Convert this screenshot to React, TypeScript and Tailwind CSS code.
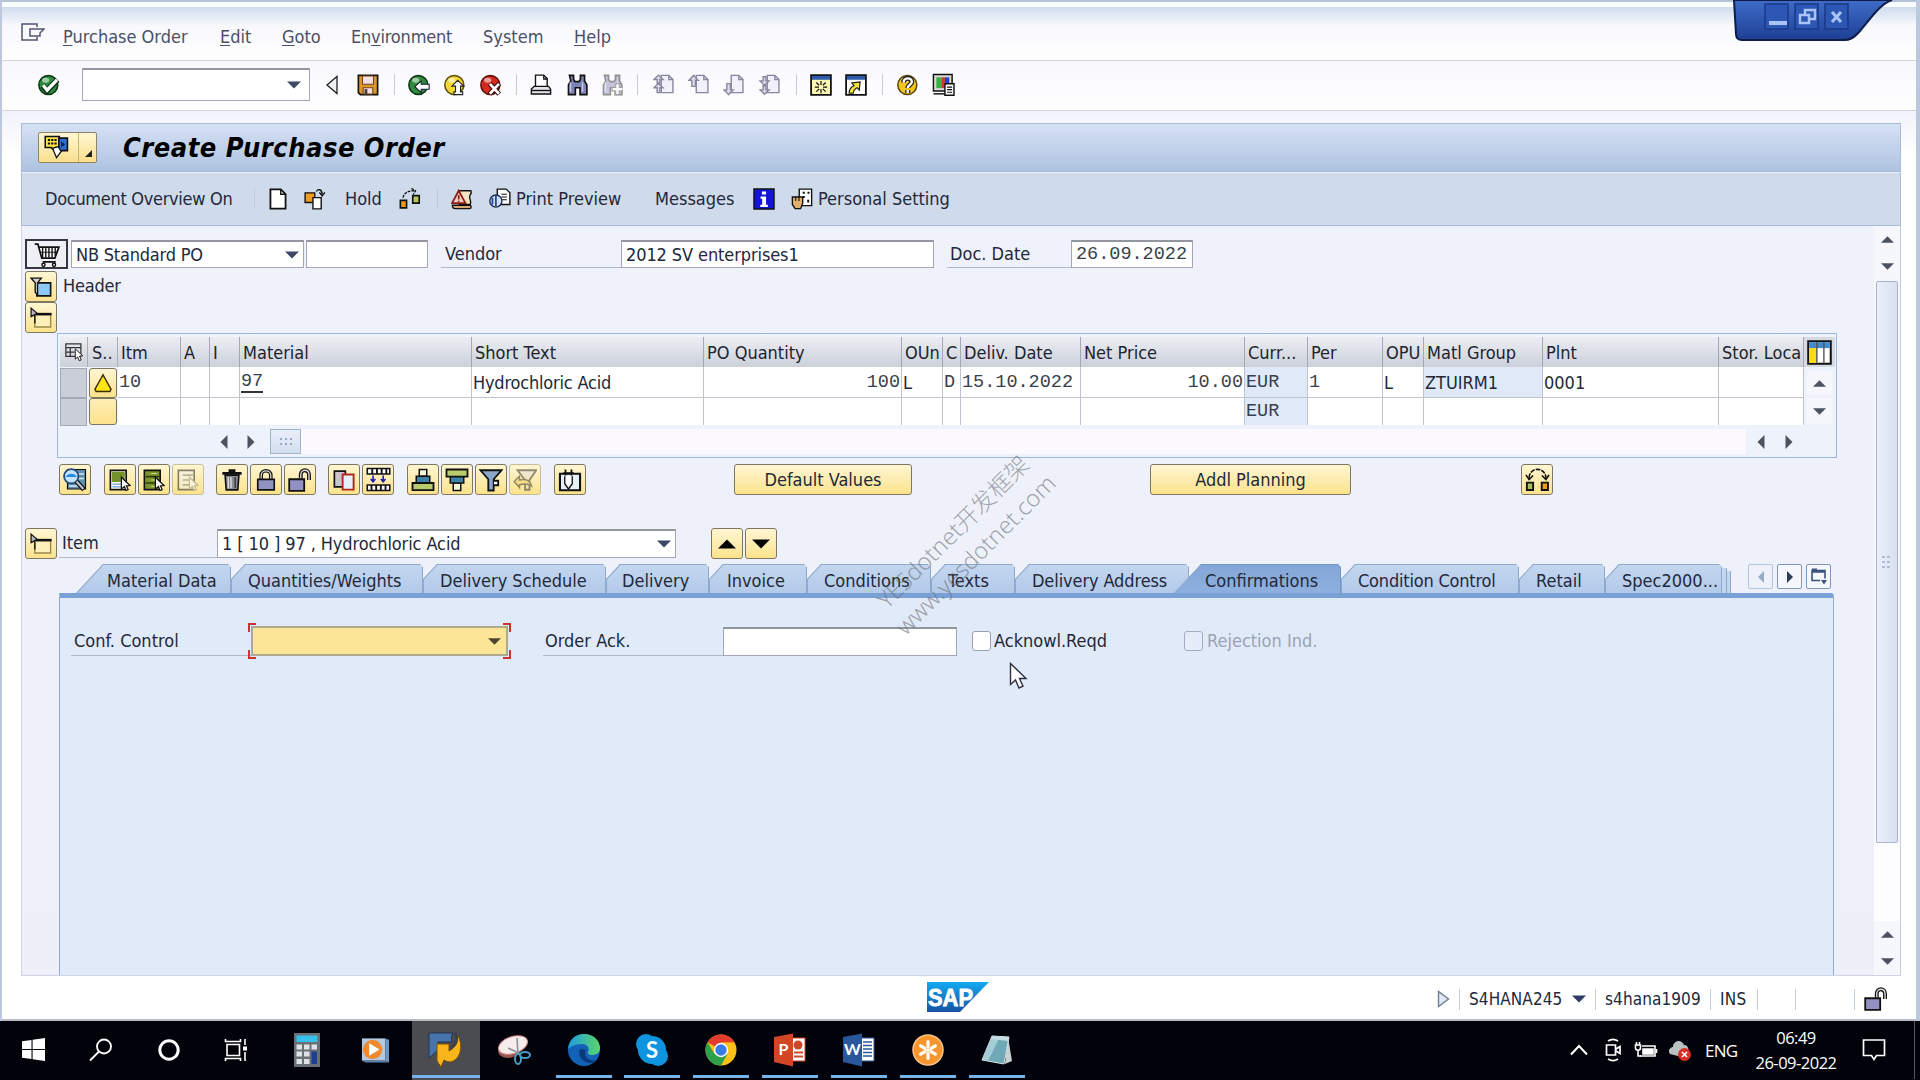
import type { ReactNode } from 'react';
import clsx from 'clsx';

const SANS = 'font-["DejaVu_Sans_Condensed","DejaVu_Sans",sans-serif] [font-stretch:condensed]';
const MONO = 'font-["Liberation_Mono",monospace] text-[18.5px] pt-[2px] text-[#3a3f4e]';

interface IconProps { children: ReactNode; size?: number; className?: string }

// All SAP GUI glyphs are drawn on a 16px grid
function Icon({ children, size = 22, className }: IconProps) {
  return (
    <svg width={size} height={size} viewBox="0 0 16 16" fill="none" stroke="#111" className={clsx('shrink-0', className)}>
      {children}
    </svg>
  );
}

function Arrow({ dir, color = '#4d5260', size = 13 }: { dir: 'up' | 'down' | 'left' | 'right'; color?: string; size?: number }) {
  const points = {
    up: '0,9 6,3 12,9',
    down: '0,3 12,3 6,9',
    left: '9,0 9,12 3,6',
    right: '3,0 9,6 3,12',
  }[dir];
  return <svg width={size} height={size} viewBox="0 0 12 12" className="shrink-0"><polygon points={points} fill={color} /></svg>;
}

const Sep = ({ className }: { className: string }) => <div className={clsx('w-px h-[21px] bg-[#c3cbe0] shrink-0', className)} />;

/* ---------- glyphs ---------- */

const Ball = ({ color, dark, children }: { color: string; dark: string; children: ReactNode }) => (
  <Icon>
    <circle cx="7.5" cy="8" r="6.9" fill={color} stroke={dark} strokeWidth="1.1" />
    <ellipse cx="5.6" cy="4.6" rx="2.6" ry="1.8" fill="#fff" fillOpacity="0.55" stroke="none" />
    {children}
  </Icon>
);
const CheckGlyph = () => <Ball color="#2f8a3c" dark="#0d3314"><path d="M3.5 8.5l3 3.6 7.6-8" stroke="#0d3314" strokeWidth="4.2" /><path d="M3.8 8.2l2.8 3.6 7.2-7.6" stroke="#fff" strokeWidth="2.4" /></Ball>;
const BackGlyph = () => <Ball color="#2f8a3c" dark="#0d3314"><path d="M5 9.2l4.6-4.2v2.5h5.8v3.6h-5.8v2.5z" fill="#fff" stroke="#123" strokeWidth=".8" /></Ball>;
const UpGlyph = () => <Ball color="#f4d730" dark="#5b4c08"><path d="M10 4.6l4.4 4.2h-2.4v4.2h1.6v2H7.2v-2H8.4V8.8H5.8z" fill="#fff" stroke="#222" strokeWidth=".8" /></Ball>;
const CancelGlyph = () => <Ball color="#d42a20" dark="#5b0f0a"><path d="M7 7l7 7.6M14 7l-7 7.6" stroke="#3c0805" strokeWidth="3.6" /><path d="M7.2 7.2l6.6 7.2M13.8 7.2l-6.6 7.2" stroke="#fff" strokeWidth="2" /></Ball>;
const HelpGlyph = () => <Ball color="#f2c51e" dark="#5b4606"><path d="M4.800 6.200c0-4 6-4 6-.4 0 2-3 2-3 4.400M7.800 11.600v2.200" stroke="#222" strokeWidth="3.600" /><path d="M4.800 6.200c0-4 6-4 6-.4 0 2-3 2-3 4.400M7.800 11.600v2.200" stroke="#fff" strokeWidth="1.700" /></Ball>;

const SaveGlyph = () => (
  <Icon>
    <path d="M1 1h14v14H2.5L1 13.5z" fill="#e0952a" strokeWidth="1.2" />
    <path d="M4 1.5h8v6H4z" fill="#f6dfe4" stroke="#6d4a1c" strokeWidth=".8" />
    <path d="M4.500 10h7v4.500h-7z" fill="#f6dfe4" stroke="#6d4a1c" strokeWidth=".8" />
    <path d="M5.500 11h2v3.500h-2z" fill="#4a3a30" stroke="none" />
  </Icon>
);
const PrintGlyph = () => (
  <Icon>
    <path d="M4 9V.8h6l2.500 2.500V9" fill="#fff" />
    <path d="M10 1v2.600h2.500" />
    <path d="M3 9h10.500l1.500 2v3.500H1V11z" fill="#e2e2ea" />
    <path d="M1 12h14" />
  </Icon>
);
const Binoculars = ({ plus }: { plus?: boolean }) => (
  <Icon className={plus ? 'opacity-45' : ''}>
    <path d="M2.500 1h3v3l1 1.500h3l1-1.500V1h3v4l1.700 3v7h-5v-5h-3.400v5h-5V8l1.700-3z" fill="#7f84b8" strokeWidth="1.200" />
    <path d="M3.200 6v7M12 6v7" stroke="#c9cdea" />
    {plus && <path d="M12 7v8M8 11h8" stroke="#fff" strokeWidth="3" />}
    {plus && <path d="M10.700 7h2.600v2.700H16v2.600h-2.700V15h-2.600v-2.700H8V9.700h2.700z" fill="#fff" stroke="#333" strokeWidth=".8" />}
  </Icon>
);
// first / previous / next / last page
const PageGlyph = ({ kind }: { kind: 'first' | 'prev' | 'next' | 'last' }) => (
  <Icon className="opacity-60">
    <path d="M6 1h5.500l3 3v9.500H6z" fill="#ececfa" stroke="#3a3a5c" />
    <path d="M11.500 1v3h3" stroke="#3a3a5c" />
    {kind === 'first' && <path d="M.7 4L4 .8 7.300 4H5v2.500H3V4zM.7 10L4 6.800 7.300 10H5v3.500H3V10z" fill="#c8c8e4" stroke="#3a3a5c" />}
    {kind === 'prev' && <path d="M4 1L.8 4.500h2V9h2.600V4.500h2z" fill="#c8c8e4" stroke="#3a3a5c" />}
    {kind === 'next' && <path d="M4 15L.8 11.500h2V7h2.600v4.500h2z" fill="#c8c8e4" stroke="#3a3a5c" />}
    {kind === 'last' && <path d="M.7 5L4 8.200 7.300 5H5V2H3v3zM.7 11.500L4 14.700l3.300-3.200H5v-3H3v3z" fill="#c8c8e4" stroke="#3a3a5c" />}
  </Icon>
);
const WindowGlyph = ({ link }: { link?: boolean }) => (
  <Icon>
    <path d="M.8 .8h14.400v14.400H.8z" fill={link ? '#fff' : '#fdf7b4'} strokeWidth="1.300" />
    <path d="M1.400 1.400h13.200v2.800H1.400z" fill="#2c5cab" stroke="none" />
    {link
      ? <path d="M3 14c0-3 1-4.500 3.500-5.500L5 6.500l6-.8-.6 6-1.600-1.800C7 11 6 12 6 14z" fill="#f4e02e" strokeWidth=".8" />
      : <path d="M8 5v9M3.500 9.500h9M4.600 6.200l6.800 6.600M11.400 6.200l-6.800 6.600" stroke="#111" strokeWidth=".9" />}
    {!link && <rect x="6.500" y="8" width="3" height="3" fill="#fdf7b4" stroke="none" />}
  </Icon>
);
const LayoutGlyph = () => (
  <Icon size={23}>
    <path d="M1 1h13v11.500H1z" fill="#d8d8d8" />
    <path d="M3 3h3.500v7.500H3z" fill="#3fae3f" stroke="none" /><path d="M6.500 3H9v7.500H6.500z" fill="#d23a2b" stroke="none" /><path d="M9 3h3v7.500H9z" fill="#2b3fc0" stroke="none" />
    <path d="M1 14.500h8" />
    <path d="M9 7.500h6.300v8H9z" fill="#fff" /><path d="M10.500 9.800h3.500M10.500 11.600h3.500M10.500 13.400h3.500" strokeWidth=".8" />
  </Icon>
);
const ServiceGlyph = () => (
  <Icon size={25}>
    <path d="M.8 1h9v7H7.500v3l-3-3H.8z" fill="#f8e544" />
    <path d="M2.500 3.200h5.600M2.500 5.400h5.600" strokeDasharray="1.400 .7" strokeWidth="1.200" />
    <path d="M9.500 2h5.500v8H9.500z" fill="#2e6fd0" /><path d="M11 4l2.500 2L11 8z" fill="#10234a" stroke="none" />
    <path d="M5.500 8.500l2.500 6 3-4-2-3z" fill="#fff" strokeWidth=".8" />
  </Icon>
);
const NewDocGlyph = () => <Icon><path d="M2.500 1h7.500l3.500 3.500V15h-11z" fill="#fff" strokeWidth="1.300" /><path d="M10 1v3.500h3.500" /></Icon>;
const CopyDocGlyph = () => (
  <Icon>
    <path d="M.8 3.500h7v7h-7z" fill="#f29a1c" /><path d="M6.500 7h6v8.200h-6z" fill="#fff" />
    <path d="M9 2.500C10 .5 13 .5 13.200 4.500M11.200 3.200l2 2.600 2-2.600" strokeWidth="1" />
  </Icon>
);
const HoldGlyph = () => (
  <Icon>
    <path d="M1 9h4.500v5.500H1z" fill="#f29a1c" strokeWidth="1.200" /><path d="M10 5.500h4.700V11H10z" fill="#b5c95e" strokeWidth="1.200" />
    <path d="M3 7c.5-3 3-5 8-5M9 .3l3 1.700-1.600 2.600" strokeDasharray="2 .8" />
  </Icon>
);
const WarnScrollGlyph = () => (
  <Icon>
    <path d="M6 2h8.500c1 2-1 3-1 4.500S15 9 14 12H6z" fill="#f4e3c1" />
    <path d="M5.600 2L10.500 11H.8z" fill="#f3cfc7" stroke="#8c2016" strokeWidth="1.300" /><path d="M5.600 5v3.400M5.600 9.200v1" stroke="#8c2016" strokeWidth="1.200" />
    <path d="M1 12.500h12.500c1.500 0 1.500 2.500 0 2.500H3c-1.200 0-2-1.200-2-2.500z" fill="#d9a774" />
  </Icon>
);
const PreviewGlyph = () => (
  <Icon>
    <path d="M6 .8h6.500L15.200 3.500V12H6z" fill="#fff" /><path d="M9 4.500h4M9 6.500h4M9 8.500h4" strokeWidth=".8" />
    <circle cx="5" cy="9.500" r="4.400" fill="#cfe0f5" stroke="#1c2b52" /><path d="M5 5.500v8M2.500 7v5" stroke="#27489a" strokeWidth="1.300" />
  </Icon>
);
const InfoGlyph = () => <Icon><path d="M.7 .7h14.600v14.600H.7z" fill="#1414d8" /><path d="M6.500 2.500h3v2.300h-3zM5.500 6.200h4v6h1.300v1.600H5.300v-1.600h1.400V7.800H5.500z" fill="#fff" stroke="none" /></Icon>;
const PersonalGlyph = () => (
  <Icon>
    <path d="M6 .8h9v12H6z" fill="#fff" /><path d="M8.500 3.500h1.500M12 3.500h1.500M8.500 6.500h1.500M12.500 8.500v2" strokeWidth="1.400" />
    <path d="M1 6.500h7.500v4.500L7 15H3l-2-3z" fill="#e2b26c" /><path d="M3.500 6.500v3M5.800 6.500v3" strokeWidth=".8" />
  </Icon>
);
const CartGlyph = () => (
  <Icon size={28}>
    <path d="M1 2.300h1.800l2.200 8h7.500L14.800 4H3.500" fill="#fff" strokeWidth="1" />
    <path d="M5.500 4v6M7.300 4v6M9.100 4v6M10.900 4v6M12.700 4v5" strokeWidth=".8" /><path d="M4 7h10" strokeWidth=".5" />
    <path d="M5.500 12.500h7.500" strokeWidth="1" /><circle cx="6" cy="14.200" r=".9" fill="#fff" strokeWidth=".8" /><circle cx="12" cy="14.200" r=".9" fill="#fff" strokeWidth=".8" />
  </Icon>
);
const ExpandGlyph = () => <Icon><path d="M5 5h10v9.500H5z" fill="#8ccaf5" strokeWidth="1.200" /><path d="M.7 1.500h7.500L5.500 5v8.500L3.800 12V5z" fill="#d8d2d8" strokeWidth="1" /></Icon>;
const CollapseGlyph = () => <Icon><path d="M3.500 5v9.500h11.500V5z" fill="#fdf0b8" stroke="#9a8a4c" /><path d="M4 5.200h11.700" strokeWidth="1.900" /><path d="M.8 .8L5.200 4.600.8 7z" fill="#b8b4bc" strokeWidth=".9" /><path d="M3.500 6v6" strokeWidth="1" /></Icon>;
const SelectAllGlyph = () => <Icon size={20}><path d="M1.500 1.500h12v10h-12zM1.500 4.500h12M1.500 8h7M5 4.500v7" stroke="#333" /><path d="M9 5.500l6 5.500-2.600.3 1.400 3-1.600.7-1.300-3-1.900 1.700z" fill="#fff" stroke="#222" strokeWidth=".8" /></Icon>;
const ConfigGlyph = () => <Icon size={25}><path d="M.8 .8h14.400v14.400H.8z" fill="#fff" strokeWidth="1.300" /><path d="M1.400 1.400h13.200v3.800H1.400z" fill="#3f8ad0" stroke="none" /><path d="M1.400 5.200h4.800v9.400H1.400z" fill="#f8dc12" stroke="none" /><path d="M6.300 1.500v13M10.800 1.500v13" stroke="#555" strokeWidth=".9" /></Icon>;
const AlertGlyph = () => <Icon size={20}><path d="M8 1.500l1.400 2.500 5 9-.9 1.800H2.500L1.600 13l5-9z" fill="#fde414" stroke="#3b2c00" strokeWidth="1.200" /></Icon>;
const Pointer = ({ dim }: { dim?: boolean }) => <path d="M9 6l6.300 6-2.600.2 1.200 2.800-1.500.6-1.200-2.900L9 14.500z" fill="#fff" stroke={dim ? '#888' : '#111'} strokeWidth=".9" />;
const DetailGlyph = () => <Icon size={24}><path d="M3 1h12v13H3z" fill="#5f93ad" strokeWidth=".8" /><path d="M10 4h4M10 7h4M4 12h7" stroke="#dbeaf2" /><circle cx="5.500" cy="5.500" r="4.800" fill="#c4e4fb" stroke="#234a7c" strokeWidth="1.200" /><path d="M1.500 6c2-3 6-3 8 0z" fill="#2a8be0" stroke="none" /><path d="M9 9l5 5.500" stroke="#111" strokeWidth="3.200" /><path d="M9 9l4.600 5" stroke="#bfc4cc" strokeWidth="1.400" /></Icon>;
const BlockGlyph = () => <Icon><path d="M1 1h11.500v14H1z" fill="#fff" strokeWidth="1.200" /><path d="M2 2h9.500v7.500H2z" fill="#75912a" stroke="none" /><path d="M2.500 11H11M2.500 13H11" stroke="#6a9cc4" /><Pointer /></Icon>;
const ListGlyph = ({ dim }: { dim?: boolean }) => (
  <Icon className={dim ? 'opacity-50' : ''}>
    <path d="M1 1h11.500v14H1z" fill={dim ? '#f2f2f2' : '#7d962c'} strokeWidth="1.200" />
    <path d={dim ? 'M4 4.500h7.500M4 8h7.500M4 11.500h5' : 'M2 5.500h9.500M2 10.200h7'} stroke={dim ? '#777' : '#2c3a08'} strokeWidth="1.200" />
    {!dim && <path d="M6 3.300h4M6 8h3M6 12.700h3" stroke="#cdd98e" strokeWidth=".8" />}
    <Pointer dim={dim} />
  </Icon>
);
const TrashGlyph = () => <Icon><path d="M3 4.500h10l-.8 10.700H3.800z" fill="#8b8b94" strokeWidth="1.200" /><path d="M5.300 6v8M7.300 6v8" stroke="#ddd" /><path d="M10.300 6v8" stroke="#333" /><path d="M1 3.200h14M5.500 1.200h5" strokeWidth="2" /></Icon>;
const LockGlyph = ({ open }: { open?: boolean }) => (
  <Icon size={open ? 24 : 22}>
    {open
      ? <><path d="M8.500 7V4.500c0-4 5.500-4 5.500 0V8" strokeWidth="2.600" /><path d="M8.500 7V4.500c0-4 5.500-4 5.500 0V8" stroke="#ddd" strokeWidth=".9" /></>
      : <><path d="M4.500 7.500V4.600c0-4.400 7-4.400 7 0v2.900" strokeWidth="2.600" /><path d="M4.500 7.500V4.600c0-4.400 7-4.400 7 0v2.900" stroke="#ddd" strokeWidth=".9" /></>}
    <path d={open ? 'M.8 7.500h10v7.700H.8z' : 'M2 7.500h12v7.700H2z'} fill="#9291c4" strokeWidth="1.200" />
  </Icon>
);
const DuplicateGlyph = () => <Icon><path d="M1 1.500h8v11.500H1z" fill="#c9c4cc" strokeWidth="1.200" /><path d="M7 4h8v11H7z" fill="#e4f0fc" stroke="#b4281c" strokeWidth="1.400" /></Icon>;
const BarcodeGlyph = () => <Icon size={25}><path d="M.8 1h14.400v3.500H.8zM.8 11.500h14.400V15H.8z" fill="#fff" /><path d="M4 1v3.500M7 1v3.500M10 1v3.500M13 1v3.500M3.500 11.500V15M6.500 11.500V15M9.500 11.500V15M12.500 11.500V15" strokeWidth="1.200" /><path d="M4.500 5.500V9M3 7.700L4.500 9.500 6 7.700M11 5.500V9M9.500 7.700L11 9.500l1.500-1.800" stroke="#1c1cb4" /></Icon>;
const SortUpGlyph = () => <Icon size={24}><path d="M5.500 1h5v4.500h-5z" fill="#f5f5d8" /><path d="M3.500 5.500h9v4.500h-9z" fill="#3d80a8" /><path d="M1 10h14v4.800H1z" fill="#b9cb6c" strokeWidth="1.200" /></Icon>;
const SortDownGlyph = () => <Icon size={24}><path d="M5.500 10h5v5h-5z" fill="#f5f5d8" /><path d="M3.500 5.500h9V10h-9z" fill="#3d80a8" /><path d="M1 1h14v4.800H1z" fill="#b9cb6c" strokeWidth="1.200" /></Icon>;
const FilterGlyph = ({ undo }: { undo?: boolean }) => (
  <Icon size={24} className={undo ? 'opacity-45' : ''}>
    {undo
      ? <><path d="M3 1.500h12.500L11 8v6.500H8V8z" fill="#ddd" strokeWidth="1.200" /><path d="M.8 9l3.500-3.500V8c4-1 7 0 8 4-2-1.700-5-1.600-8-.8V13z" fill="#f0d060" /></>
      : <><path d="M1 1.500h14L9.800 7.500V15H6.200V7.500z" fill="#8ba6c8" strokeWidth="1.200" /><path d="M10 8.500h2.800v3H10" fill="#fff" strokeWidth="1.200" /></>}
  </Icon>
);
const PlanGlyph = () => <Icon size={24}><path d="M1.300 3.800h13.400v11H1.300z" fill="#e4f0fa" strokeWidth="1.400" /><path d="M5 1v4M9 1v4M3.500 3.500h7" strokeWidth="1.200" /><path d="M4.500 5.500v5L7 14l2.500-3.500v-5" fill="#fff" strokeWidth=".9" /></Icon>;
const SwapGlyph = () => <Icon size={25}><path d="M1.200 10h4v4.700h-4z" fill="#a8bd5c" strokeWidth="1.200" /><path d="M10.700 10h4v4.700h-4z" fill="#f29a1c" strokeWidth="1.200" /><path d="M2.500 7C3 3 5.500 1.500 8 1.500S13 3 13.500 7" strokeDasharray="3 .7" /><path d="M.6 5l2 3 2.600-2.600M15.400 5l-2 3-2.600-2.600" /></Icon>;

/* ---------- small controls ---------- */

function YellowButton({ children, className, dim }: { children?: ReactNode; className?: string; dim?: boolean }) {
  return (
    <button className={clsx(
      'flex items-center justify-center shrink-0 h-[31px] rounded-[3px] border-[1.5px] bg-linear-to-b from-[#fff6d2] to-[#fce28c]',
      dim ? 'border-[#c6bd9c]' : 'border-[#7d7762]',
      className,
    )}>
      {children}
    </button>
  );
}

const FIELD = 'flex items-center shrink-0 bg-white border border-[#a3a6b4] border-t-2 border-t-[#94969f]';

const MENU = [
  { pre: '', key: 'P', post: 'urchase Order', w: 'w-[157px]' },
  { pre: '', key: 'E', post: 'dit', w: 'w-[62px]' },
  { pre: '', key: 'G', post: 'oto', w: 'w-[69px]' },
  { pre: 'En', key: 'v', post: 'ironment', w: 'w-[132px] tracking-[-0.2px]' },
  { pre: 'S', key: 'y', post: 'stem', w: 'w-[91px]' },
  { pre: '', key: 'H', post: 'elp', w: 'w-[60px]' },
];

interface Column { title: string; w: string; value?: ReactNode; value2?: string; mono?: boolean; right?: boolean; shade?: boolean; shade2?: boolean }
const COLUMNS: Column[] = [
  { title: 'Itm', w: 'w-[63px]', value: '10', mono: true },
  { title: 'A', w: 'w-[29px]' },
  { title: 'I', w: 'w-[30px]' },
  { title: 'Material', w: 'w-[232px]', value: <span className="border-b-2 border-[#333]">97</span>, mono: true },
  { title: 'Short Text', w: 'w-[232px]', value: <span className="tracking-[-0.2px]">Hydrochloric Acid</span> },
  { title: 'PO Quantity', w: 'w-[198px]', value: '100', mono: true, right: true },
  { title: 'OUn', w: 'w-[41px]', value: 'L' },
  { title: 'C', w: 'w-[18px]', value: 'D', mono: true },
  { title: 'Deliv. Date', w: 'w-[120px]', value: '15.10.2022', mono: true },
  { title: 'Net Price', w: 'w-[164px]', value: '10.00', mono: true, right: true },
  { title: 'Curr...', w: 'w-[63px]', value: 'EUR', value2: 'EUR', mono: true, shade: true, shade2: true },
  { title: 'Per', w: 'w-[75px]', value: '1', mono: true },
  { title: 'OPU', w: 'w-[41px]', value: 'L' },
  { title: 'Matl Group', w: 'w-[119px]', value: 'ZTUIRM1', shade: true },
  { title: 'Plnt', w: 'w-[176px]', value: '0001' },
  { title: 'Stor. Loca', w: 'w-[85px]' },
];

const TABS = [
  { label: 'Material Data', cls: 'w-[155px] pl-[31px] [clip-path:polygon(0_100%,27px_0,152px_0,155px_3px,100%_100%)]' },
  { label: 'Quantities/Weights', cls: 'w-[192px] pl-[17px]' },
  { label: 'Delivery Schedule', cls: 'w-[183px] pl-[17px]' },
  { label: 'Delivery', cls: 'w-[103px] pl-[16px]' },
  { label: 'Invoice', cls: 'w-[98px] pl-[18px]' },
  { label: 'Conditions', cls: 'w-[124px] pl-[17px]' },
  { label: 'Texts', cls: 'w-[84px] pl-[17px]' },
  { label: 'Delivery Address', cls: 'w-[174px] pl-[17px] tracking-[-0.1px]' },
  { label: 'Confirmations', active: true, cls: 'w-[167px] pl-[31px] -ml-[15px] [clip-path:polygon(0_100%,27px_0,164px_0,167px_3px,100%_100%)]' },
  { label: 'Condition Control', cls: 'w-[178px] pl-[17px] tracking-[-0.2px]' },
  { label: 'Retail', cls: 'w-[86px] pl-[17px]' },
  { label: 'Spec2000...', cls: 'w-[117px] pl-[17px]' },
];
const TAB_CLIP = '[clip-path:polygon(0_100%,0_15px,14px_0,calc(100%-3px)_0,100%_3px,100%_100%)]';

/* ---------- sections ---------- */

function MenuBar() {
  return (
    <div className="h-[54px] shrink-0 flex items-center pt-[6px] pl-[19px] border-b border-[#d3d4de] bg-linear-to-b from-[#d0dced] via-[#f8f8fd] via-35% to-white">
      <svg width="24" height="19" viewBox="0 0 24 19" fill="none" stroke="#4f5572" strokeWidth="1.500" className="mr-[18px] -mt-[8px] shrink-0">
        <path d="M16 4V1H1v16h15v-3" /><path d="M9 13V6h14l-4 4v3z" />
      </svg>
      {MENU.map(m => (
        <span key={m.key + m.post} className={clsx('shrink-0 text-[#4b4f68]', m.w)}>
          {m.pre}<u className="underline-offset-2">{m.key}</u>{m.post}
        </span>
      ))}
    </div>
  );
}

function SystemBar() {
  return (
    <div className="h-[50px] shrink-0 flex items-center pb-[2px] pl-[36px] border-b border-[#d3d4de] bg-linear-to-b from-[#f8f7fc] to-white">
      <CheckGlyph />
      <div className={clsx(FIELD, 'ml-[22px] w-[228px] h-[33px] justify-end pr-[8px]')}><Arrow dir="down" color="#3d4766" size={14} /></div>
      <svg width="14" height="20" viewBox="0 0 14 20" className="ml-[15px] shrink-0"><path d="M12 1.500v17L2 10z" fill="#f1f1f6" stroke="#222" strokeWidth="1.300" /></svg>
      <div className="w-[18px]" /><SaveGlyph />
      <Sep className="ml-[15px] mr-[13px]" />
      <BackGlyph /><div className="w-[14px]" /><UpGlyph /><div className="w-[14px]" /><CancelGlyph />
      <Sep className="ml-[14px] mr-[13px]" />
      <PrintGlyph /><div className="w-[14px]" /><Binoculars /><div className="w-[13px]" /><Binoculars plus />
      <Sep className="ml-[14px] mr-[15px]" />
      <PageGlyph kind="first" /><div className="w-[13px]" /><PageGlyph kind="prev" /><div className="w-[13px]" />
      <PageGlyph kind="next" /><div className="w-[14px]" /><PageGlyph kind="last" />
      <Sep className="ml-[15px] mr-[13px]" />
      <WindowGlyph /><div className="w-[13px]" /><WindowGlyph link />
      <Sep className="ml-[15px] mr-[14px]" />
      <HelpGlyph /><div className="w-[13px]" /><LayoutGlyph />
    </div>
  );
}

function TitleBar() {
  return (
    <div className="h-[49px] flex items-center pl-[16px] border border-[#a9bad6] bg-linear-to-b from-[#d6e1f5] to-[#aec3e0]">
      <button className="flex items-center w-[59px] h-[31px] rounded-[2px] border-[1.5px] border-[#8e8768] bg-linear-to-b from-[#fff6d2] to-[#fadf8c]">
        <div className="w-[40px] h-full flex items-center justify-center pr-[4px] border-r border-[#c9b676]"><ServiceGlyph /></div>
        <svg width="7" height="7" viewBox="0 0 7 7" className="ml-[6px] mt-[12px]"><path d="M7 0v7H0z" fill="#222" /></svg>
      </button>
      <span className="ml-[26px] font-bold italic text-[27px] leading-none text-black tracking-[0.5px]">Create Purchase Order</span>
    </div>
  );
}

function AppBar() {
  return (
    <div className="h-[54px] flex items-center pl-[23px] pb-[1px] border border-t-[#eef3fb] border-[#a9bad6] bg-[#cfdbeb]">
      <span className="w-[209px] tracking-[-0.3px]">Document Overview On</span>
      <Sep className="mr-[12px]" />
      <NewDocGlyph /><div className="w-[15px]" /><CopyDocGlyph />
      <span className="w-[54px] ml-[19px]">Hold</span>
      <HoldGlyph /><Sep className="ml-[16px] mr-[13px]" />
      <WarnScrollGlyph /><div className="w-[16px]" /><PreviewGlyph />
      <span className="w-[139px] ml-[5px]">Print Preview</span>
      <span className="w-[98px]">Messages</span>
      <InfoGlyph /><div className="w-[16px]" /><PersonalGlyph />
      <span className="ml-[5px]">Personal Setting</span>
    </div>
  );
}

function DocumentRow() {
  return (
    <div className="mt-[13px] h-[30px] flex items-center">
      <button className="flex items-center justify-center w-[43px] h-[30px] border-[2.5px] border-[#36373e] bg-[#eef0f6] shrink-0"><CartGlyph /></button>
      <div className={clsx(FIELD, 'ml-[3px] w-[233px] h-[28px] pl-[4px] pr-[4px] justify-between')}>
        <span className="tracking-[-0.2px]">NB Standard PO</span><Arrow dir="down" color="#3d4766" size={14} />
      </div>
      <div className={clsx(FIELD, 'ml-[2px] w-[122px] h-[28px]')} />
      <div className="ml-[13px] w-[180px] h-[28px] pl-[4px] flex items-center border-b border-[#b3b8c8]">Vendor</div>
      <div className={clsx(FIELD, 'w-[313px] h-[28px] pl-[4px] tracking-[-0.1px]')}>2012 SV enterprises1</div>
      <div className="ml-[13px] w-[124px] h-[28px] pl-[3px] flex items-center border-b border-[#b3b8c8]">Doc. Date</div>
      <div className={clsx(FIELD, MONO, 'w-[122px] h-[28px] pl-[4px]')}>26.09.2022</div>
    </div>
  );
}

function ItemTable() {
  return (
    <div className="ml-[32px] w-[1780px] h-[125px] border-[1.5px] border-[#9cb7dd] bg-[#eef2fa] pt-[3px] pl-[2px] flex flex-col shrink-0">
      <div className="flex">
        <div className="flex flex-col w-[27px] shrink-0">
          <div className="h-[30px] flex items-center justify-center bg-linear-to-b from-[#eceef3] to-[#ccd0d9]"><SelectAllGlyph /></div>
          <div className="h-[30px] mt-px bg-[#c9ced9] border border-[#a4a9b8]" />
          <div className="h-[28px] bg-[#c9ced9] border border-[#a4a9b8]" />
        </div>
        <div className="flex flex-col w-[31px] shrink-0">
          <div className="h-[30px] pl-[4px] pt-[2px] flex items-center border-x border-[#a9adb9] bg-linear-to-b from-[#eceef3] to-[#ccd0d9]">S..</div>
          <YellowButton className="ml-[2px] w-[28px] h-[30px]! mt-px"><AlertGlyph /></YellowButton>
          <YellowButton className="ml-[2px] w-[28px] h-[27px]! from-[#fdeeb6]!" />
        </div>
        {COLUMNS.map(c => (
          <div key={c.title} className={clsx('flex flex-col shrink-0 whitespace-nowrap', c.w)}>
            <div className="h-[30px] pl-[3px] pt-[2px] flex items-center border-r border-[#a4a8b6] bg-linear-to-b from-[#eceef3] to-[#ccd0d9] text-[#20242e]">{c.title}</div>
            <div className={clsx(
              'h-[31px] px-px flex items-center border-r border-b border-[#bfc3d0]',
              c.mono ? MONO : 'pt-[2px]', c.right && 'justify-end', c.shade ? 'bg-[#dfe9f7]' : 'bg-white',
            )}>{c.value}</div>
            <div className={clsx('h-[27px] px-px flex items-center border-r border-[#bfc3d0]', c.mono && MONO, c.shade2 ? 'bg-[#dfe9f7]' : 'bg-white')}>{c.value2}</div>
          </div>
        ))}
        <div className="flex flex-col items-center w-[31px] shrink-0">
          <div className="h-[30px] w-full flex items-center justify-center bg-[#d6d9e1]"><ConfigGlyph /></div>
          <div className="mt-[4px] h-[24px] w-[25px] flex items-center justify-center bg-[#f6f7fc]"><Arrow dir="up" /></div>
          <div className="mt-[3px] h-[26px] w-[25px] flex items-center justify-center bg-[#f6f7fc]"><Arrow dir="down" /></div>
        </div>
      </div>
      <div className="flex items-center mt-[3px] h-[25px]">
        <div className="ml-[157px] w-[17px]"><Arrow dir="left" size={14} /></div>
        <div className="ml-[10px] w-[26px]"><Arrow dir="right" size={14} /></div>
        <div className="w-[31px] h-[25px] border border-[#a3b2cc] bg-linear-to-b from-[#e9effa] to-[#d2deef] flex items-center justify-center">
          <svg width="14" height="10" fill="#9aa6bf"><path d="M1 1h2v2H1zM6 1h2v2H6zM11 1h2v2h-2zM1 6h2v2H1zM6 6h2v2H6zM11 6h2v2h-2z" /></svg>
        </div>
        <div className="w-[1445px] h-full bg-[#fbf9fe]" />
        <div className="ml-[8px] w-[28px]"><Arrow dir="left" size={14} /></div>
        <Arrow dir="right" size={14} />
      </div>
    </div>
  );
}

function ItemActions() {
  return (
    <div className="mt-[6px] ml-[34px] flex items-center h-[31px]">
      <YellowButton className="w-[32px]"><DetailGlyph /></YellowButton>
      <div className="flex gap-[2px] ml-[13px]">
        <YellowButton className="w-[32px]"><BlockGlyph /></YellowButton>
        <YellowButton className="w-[32px]"><ListGlyph /></YellowButton>
        <YellowButton className="w-[32px]" dim><ListGlyph dim /></YellowButton>
      </div>
      <div className="flex gap-[2px] ml-[12px]">
        <YellowButton className="w-[32px]"><TrashGlyph /></YellowButton>
        <YellowButton className="w-[32px]"><LockGlyph /></YellowButton>
        <YellowButton className="w-[32px]"><LockGlyph open /></YellowButton>
      </div>
      <div className="flex gap-[2px] ml-[12px]">
        <YellowButton className="w-[32px]"><DuplicateGlyph /></YellowButton>
        <YellowButton className="w-[32px]"><BarcodeGlyph /></YellowButton>
      </div>
      <div className="flex gap-[2px] ml-[13px]">
        <YellowButton className="w-[32px]"><SortUpGlyph /></YellowButton>
        <YellowButton className="w-[32px]"><SortDownGlyph /></YellowButton>
        <YellowButton className="w-[32px]"><FilterGlyph /></YellowButton>
        <YellowButton className="w-[32px]" dim><FilterGlyph undo /></YellowButton>
      </div>
      <YellowButton className="w-[32px] ml-[13px]"><PlanGlyph /></YellowButton>
      <YellowButton className="w-[178px] ml-[148px]">Default Values</YellowButton>
      <YellowButton className="w-[201px] ml-[238px]">Addl Planning</YellowButton>
      <YellowButton className="w-[32px] ml-[170px]"><SwapGlyph /></YellowButton>
    </div>
  );
}

function ItemSelector() {
  return (
    <div className="mt-[33px] flex items-center h-[31px]">
      <YellowButton className="w-[32px]"><CollapseGlyph /></YellowButton>
      <div className="ml-[2px] w-[158px] h-[29px] pl-[3px] flex items-center border-b border-[#b3b8c8]">Item</div>
      <div className={clsx(FIELD, 'w-[459px] h-[29px] pl-[4px] pr-[4px] justify-between')}>
        <span className="tracking-[-0.1px]">1 [ 10 ] 97 , Hydrochloric Acid</span><Arrow dir="down" color="#3d4766" size={14} />
      </div>
      <YellowButton className="w-[32px] ml-[35px]"><Arrow dir="up" color="#000" size={18} /></YellowButton>
      <YellowButton className="w-[32px] ml-[2px]"><Arrow dir="down" color="#000" size={18} /></YellowButton>
    </div>
  );
}

function TabStrip() {
  return (
    <div className="mt-[5px] ml-[51px] flex h-[29px] whitespace-nowrap">
      {TABS.map((t, i) => (
        <div key={t.label} className={clsx(
          'relative shrink-0 flex items-center pt-[3px] border-t-[1.5px] border-r-[1.5px]',
          i !== 0 && !t.active && TAB_CLIP, t.cls,
          t.active ? 'border-[#7396c8] bg-linear-to-b from-[#83a6d8] to-[#8fb0df]' : 'border-[#8fa9cc] bg-linear-to-b from-[#c3d6ef] to-[#b2cae9]',
        )}>
          <svg width="28" height="29" className="absolute -left-px -top-[1.5px]" fill="none" stroke="#8fa9cc" strokeWidth="2">
            <path d={i === 0 || t.active ? 'M1 29L28 0' : 'M1 29V15L15 0'} />
          </svg>
          {t.label}
        </div>
      ))}
      <div className="w-[5px] mt-[4px] bg-[#c3d6ef] border-r border-[#8fa9cc]" />
      <div className="w-[4px] mt-[7px] bg-[#c3d6ef] border-r border-[#8fa9cc]" />
      <div className="ml-[17px] flex gap-[4px]">
        <div className="w-[25px] h-[25px] rounded-[2px] border border-[#b4c4de] flex items-center justify-center"><Arrow dir="left" color="#98abc6" size={12} /></div>
        <div className="w-[25px] h-[25px] rounded-[2px] border border-[#7f96bd] bg-[#f4f7fc] flex items-center justify-center"><Arrow dir="right" color="#2f3c58" size={12} /></div>
        <div className="w-[25px] h-[25px] rounded-[2px] border border-[#7f96bd] bg-[#f4f7fc] flex items-center justify-center">
          <svg width="18" height="18" viewBox="0 0 18 18" fill="none" stroke="#3a527f" strokeWidth="1.600"><path d="M10 12.500H2V2.500h13v8M2 4h13" /><path d="M2 1.500h5" strokeWidth="2" /><path d="M11 12h6l-3 4.500z" fill="#3a527f" stroke="none" /></svg>
        </div>
      </div>
    </div>
  );
}

const Corner = ({ cls }: { cls: string }) => <div className={clsx('absolute w-[8px] h-[9px] border-[#d22f2f]', cls)} />;

function ConfirmationsPanel() {
  return (
    <div className="ml-[34px] w-[1775px] flex-1 border-x border-[#8fabd3] border-t-[5px] border-t-[#79a1d6] rounded-tr-[3px] bg-[#e1eaf8]">
      <div className="mt-[28px] ml-[11px] flex items-center h-[30px]">
        <div className="w-[180px] h-[29px] pl-[3px] flex items-center border-b border-[#b3b8c8]">Conf. Control</div>
        <div className="relative w-[257px] h-[30px] border-2 border-[#b1a98c] bg-[#fde598] flex items-center justify-end pr-[5px]">
          <Arrow dir="down" color="#4a4630" size={13} />
          <Corner cls="-left-[5px] -top-[5px] border-l-2 border-t-2" />
          <Corner cls="-right-[5px] -top-[5px] border-r-2 border-t-2" />
          <Corner cls="-left-[5px] -bottom-[5px] border-l-2 border-b-2" />
          <Corner cls="-right-[5px] -bottom-[5px] border-r-2 border-b-2" />
        </div>
        <div className="ml-[35px] w-[180px] h-[29px] pl-[2px] flex items-center border-b border-[#b3b8c8]">Order Ack.</div>
        <div className={clsx(FIELD, 'w-[234px] h-[29px]')} />
        <div className="ml-[15px] w-[19px] h-[20px] rounded-[3px] border-[1.5px] border-[#9a9fb4] bg-white" />
        <span className="ml-[3px] w-[190px]">Acknowl.Reqd</span>
        <div className="w-[19px] h-[20px] rounded-[3px] border-[1.5px] border-[#a2acc2] bg-[#e6edf8]" />
        <span className="ml-[4px] text-[#9aa3b5]">Rejection Ind.</span>
      </div>
    </div>
  );
}

function PageScrollbar() {
  return (
    <div className="w-[27px] flex flex-col items-center bg-[#f6f7fd] border-r border-[#c5cbe0]">
      <div className="h-[26px] flex items-center"><Arrow dir="up" size={13} /></div>
      <div className="h-[28px] flex items-center"><Arrow dir="down" size={13} /></div>
      <div className="w-[22px] h-[562px] mt-px border-[1.5px] border-[#a9b5cf] rounded-[2px] bg-linear-to-r from-[#eaf0fa] to-[#d8e0f0] flex items-center justify-center">
        <svg width="10" height="14" fill="#b3bdd2"><path d="M0 1h3v2H0zM5 1h3v2H5zM0 6h3v2H0zM5 6h3v2H5zM0 11h3v2H0zM5 11h3v2H5z" /></svg>
      </div>
      <div className="w-full flex-1 bg-[#fdfdff]" />
      <div className="h-[26px] flex items-center"><Arrow dir="up" size={13} /></div>
      <div className="h-[28px] flex items-center"><Arrow dir="down" size={13} /></div>
    </div>
  );
}

function StatusBar() {
  return (
    <div className="h-[45px] flex items-center pt-[3px] pl-[925px] border-b-2 border-[#b9bbc2] bg-white">
      <svg width="63" height="30" viewBox="0 0 63 30" className="shrink-0 -mt-[5px]">
        <defs><linearGradient id="sap" x2="0" y2="1"><stop stopColor="#12aaf2" /><stop offset="1" stopColor="#1a52a4" /></linearGradient></defs>
        <path d="M0 0h62L33 30H0z" fill="url(#sap)" />
        <text x="1" y="23.500" fill="#fff" stroke="#fff" strokeWidth=".8" fontFamily="Liberation Sans, sans-serif" fontWeight="bold" fontSize="24" textLength="45" lengthAdjust="spacingAndGlyphs">SAP</text>
      </svg>
      <svg width="13" height="18" viewBox="0 0 13 18" className="ml-[447px] shrink-0"><path d="M1.500 1.500v15L11.500 9z" fill="#dfe9f5" stroke="#6e7f98" strokeWidth="1.400" /></svg>
      <Sep className="ml-[9px] mr-[9px]" />
      <span className="w-[103px] text-[17px] tracking-[0.1px]">S4HANA245</span>
      <Arrow dir="down" color="#2f3c68" size={14} />
      <Sep className="ml-[9px] mr-[9px]" />
      <span className="w-[105px] text-[17px] tracking-[0.1px]">s4hana1909</span>
      <Sep className="mr-[9px]" />
      <span className="w-[37px] text-[17px] tracking-[0.3px]">INS</span>
      <Sep className="mr-[37px]" /><Sep className="mr-[58px]" /><Sep className="mr-[9px]" />
      <LockGlyph open />
    </div>
  );
}

/* ---------- windows taskbar ---------- */

function TaskItem({ children, w, open, active }: { children: ReactNode; w: string; open?: boolean; active?: boolean }) {
  return (
    <div className={clsx('h-full shrink-0 flex flex-col items-center', w, active && 'bg-[#4b4c52]')}>
      <div className="flex-1 flex items-center pt-[3px]">{children}</div>
      <div className={clsx('h-[3px] mb-[2px]', active ? 'w-full' : 'w-[56px]', (open || active) && 'bg-[#76b3ea]')} />
    </div>
  );
}

function OfficeIcon({ letter, color, page }: { letter: string; color: string; page: ReactNode }) {
  return (
    <svg width="34" height="34" viewBox="0 0 34 34">
      <path d="M17 5h15v23H17z" fill="#fff" stroke={color} />
      {page}
      <path d="M1 4l19-3.500v33L1 29z" fill={color} />
      <text x="10.500" y="22" textAnchor="middle" fill="#fff" fontFamily="Lato, sans-serif" fontWeight="bold" fontSize="16">{letter}</text>
    </svg>
  );
}

function Taskbar() {
  return (
    <div className="h-[59px] bg-[#02030a] flex text-white">
      <TaskItem w="w-[67px]">
        <svg width="23" height="23" viewBox="0 0 23 23" fill="#fff"><path d="M0 3.200l9.500-1.300v9H0zM10.600 1.700L23 0v10.900H10.600zM0 12h9.500v9L0 19.700zM10.600 12H23v11l-12.400-1.700z" /></svg>
      </TaskItem>
      <TaskItem w="w-[68px]">
        <svg width="24" height="24" viewBox="0 0 24 24" fill="none" stroke="#fff" strokeWidth="1.800"><circle cx="15" cy="8.500" r="7" /><path d="M10 13.500L1 22.500" /></svg>
      </TaskItem>
      <TaskItem w="w-[67px]">
        <svg width="24" height="24" viewBox="0 0 24 24"><circle cx="12" cy="12" r="9.200" fill="none" stroke="#fff" strokeWidth="3" /></svg>
      </TaskItem>
      <TaskItem w="w-[67px]">
        <svg width="24" height="24" viewBox="0 0 24 24" fill="none" stroke="#fff" strokeWidth="1.600"><path d="M3 6.500h12.500v11H3zM1.500 1v2.500h15V1M1.500 23v-2.500h15V23M21 1v6M21 14v9" /><path d="M19 8.500h4v4h-4z" fill="#fff" stroke="none" /></svg>
      </TaskItem>
      <TaskItem w="w-[75px]">
        <svg width="26" height="34" viewBox="0 0 26 34">
          <path d="M0 0h26v34H0z" fill="#6b7076" /><path d="M2.500 2.500h21v6.500h-21z" fill="#37c0ee" />
          <path d="M2.500 11.500h5.500v5H2.500zM10 11.500h5.500v5H10zM17.500 11.500H23v5h-5.500zM2.500 18.500h5.500v5H2.500zM10 18.500h5.500v5H10zM2.500 26h5.500v5H2.500zM10 26h5.500v5H10z" fill="#dfe2e6" /><path d="M17.500 18.500H23V31h-5.500z" fill="#1d3f8f" />
        </svg>
      </TaskItem>
      <TaskItem w="w-[68px]">
        <svg width="29" height="28" viewBox="0 0 30 28" className="mr-[5px]"><path d="M1 2h24v23H1z" fill="#b4cae2" /><path d="M25 2l4 1.500V27l-4-2z" fill="#6f96c0" /><path d="M1 25h24l4 2H5z" fill="#5c83ae" /><circle cx="12" cy="13.500" r="10" fill="#f08a2e" /><path d="M8.500 7v13l10.500-6.500z" fill="#fff" /></svg>
      </TaskItem>
      <TaskItem w="w-[68px]" active>
        <svg width="34" height="36" viewBox="0 0 34 36" className="ml-[-3px]">
          <path d="M1 1h24c-2 3-2 6-1 9H10v8l-9 8z" fill="#4774ab" stroke="#1f3452" />
          <path d="M28 1c7 8 6 22-1 27-4 3-8 2-11 0l-3 7-4-6V12h12v7c6-3 8-9 7-18z" fill="#f9b61a" stroke="#7a4c05" />
          <path d="M27 1c3 5 2 11-4 15" fill="none" stroke="#3b4148" strokeWidth="3" />
        </svg>
      </TaskItem>
      <TaskItem w="w-[70px]">
        <svg width="34" height="32" viewBox="0 0 34 32" className="mr-[2px]">
          <ellipse cx="11" cy="17" rx="10" ry="7" fill="#9c5650" /><ellipse cx="16" cy="11" rx="15" ry="8.500" fill="#f6ecec" stroke="#c88" transform="rotate(-18 16 11)" />
          <path d="M20 4l1 16M11 14l13 6" stroke="#8a949c" strokeWidth="1.600" /><ellipse cx="21" cy="25" rx="3" ry="5" fill="none" stroke="#4a9cc0" strokeWidth="2" /><ellipse cx="28" cy="21" rx="5" ry="3" fill="none" stroke="#4a9cc0" strokeWidth="2" />
        </svg>
      </TaskItem>
      <TaskItem w="w-[67px]" open>
        <svg width="34" height="34" viewBox="0 0 34 34">
          <defs><linearGradient id="edge" x2="1"><stop stopColor="#1c9be0" /><stop offset="1" stopColor="#5cd66a" /></linearGradient></defs>
          <circle cx="17" cy="17" r="16" fill="#1263b8" />
          <path d="M1 16C2 6 9 1 17 1c10 0 16 7 16 14 0 5-4 7-8 7-3 0-5-1-4-3 2-3 0-8-6-8-7 0-12 3-14 5z" fill="url(#edge)" />
          <path d="M12 19c0 6 5 11 12 11 2 0 5-1 6-3-5 2-12-1-12-7 0-2 1-3 1-3-4-2-7-1-7 2z" fill="#0b3a7c" />
        </svg>
      </TaskItem>
      <TaskItem w="w-[70px]" open>
        <svg width="34" height="34" viewBox="0 0 34 34"><circle cx="11" cy="11" r="10" fill="#0f95e0" /><circle cx="23" cy="23" r="10" fill="#0f95e0" /><circle cx="17" cy="17" r="14" fill="#0f95e0" /><text x="17" y="24.500" textAnchor="middle" fill="#fff" fontFamily="Lato, sans-serif" fontWeight="bold" fontSize="22">S</text></svg>
      </TaskItem>
      <TaskItem w="w-[68px]" open>
        <svg width="32" height="32" viewBox="0 0 32 32">
          <circle cx="16" cy="16" r="15.500" fill="#fbc116" /><path d="M16 16L2.600 8.200A15.500 15.500 0 0 1 29.400 8.200L16 8.500z" fill="#e33b2e" />
          <path d="M2.600 8.200A15.500 15.500 0 0 0 16 31.500L22.500 20 16 16 9.500 20z" fill="#2da04a" /><circle cx="16" cy="16" r="7.200" fill="#fff" /><circle cx="16" cy="16" r="5.700" fill="#3b7de8" />
        </svg>
      </TaskItem>
      <TaskItem w="w-[69px]" open>
        <OfficeIcon letter="P" color="#d24625" page={<><circle cx="25" cy="12" r="4.500" fill="#d24625" /><path d="M21 19.500h9M21 23.500h9" stroke="#d24625" strokeWidth="2" /></>} />
      </TaskItem>
      <TaskItem w="w-[69px]" open>
        <OfficeIcon letter="W" color="#2a569c" page={<path d="M21 9h9M21 12.500h9M21 16h9M21 19.500h9M21 23h9" stroke="#2a569c" strokeWidth="1.600" />} />
      </TaskItem>
      <TaskItem w="w-[69px]" open>
        <svg width="32" height="32" viewBox="0 0 32 32"><circle cx="16" cy="16" r="15" fill="#f7962c" stroke="#fbc58a" strokeWidth="1.500" /><g stroke="#fff" strokeWidth="3.200" strokeLinecap="round"><path d="M16 7.500v5M16 19.500v5M8.600 11.800l4.400 2.500M19 17.700l4.400 2.500M8.600 20.200l4.400-2.500M19 14.300l4.400-2.500" /></g><circle cx="16" cy="16" r="1.800" fill="#fff" /></svg>
      </TaskItem>
      <TaskItem w="w-[69px]" open>
        <svg width="34" height="32" viewBox="0 0 34 32"><path d="M28 3l4 24-7 3z" fill="#c9d0d2" /><path d="M12 2l17 1-5 27L2 26z" fill="#6fa9b8" stroke="#d8e4e6" /><path d="M12 2l8 .5L8 27l-6-1z" fill="#a4cdd6" /><path d="M12 2l17 1-1 4-17-2z" fill="#c4dde2" /></svg>
      </TaskItem>
      <div className="ml-auto flex items-center pb-[1px] pr-[5px]">
        <svg width="18" height="12" viewBox="0 0 18 12" fill="none" stroke="#fff" strokeWidth="2" className="mr-[17px]"><path d="M1 10.500L9 2l8 8.500" /></svg>
        <svg width="17" height="24" viewBox="0 0 17 24" fill="none" stroke="#fff" strokeWidth="1.700" className="mr-[12px]"><path d="M1.500 7h9v10h-9zM11 11l4-2.500v7L11 13M3 3c3-2 7-2 10 0M3 21c3 2 7 2 10 0" /></svg>
        <svg width="24" height="18" viewBox="0 0 24 18" fill="none" stroke="#fff" strokeWidth="1.600" className="mr-[10px]"><path d="M8 5h13v10H6" /><path d="M9 8h10v5H9z" fill="#fff" /><path d="M22.500 8v4M1.500 4h5v3c0 3-5 3-5 0zM2.500 1v3M5.500 1v3M4 9.500V15h3" /></svg>
        <svg width="24" height="23" viewBox="0 0 24 23" className="mr-[13px]"><path d="M2 15c-3-4 1-7 3-7C5 2 13-1 16 6c4 0 5 4 4 7L10 17z" fill="#b9c2c0" /><circle cx="16.500" cy="15.500" r="6.500" fill="#d92f28" /><path d="M14 13l5 5M19 13l-5 5" stroke="#fff" strokeWidth="1.600" /></svg>
        <span className="w-[50px] text-[17px] font-['Open_Sans',sans-serif] [font-stretch:normal] tracking-[-0.7px]">ENG</span>
        <div className="w-[82px] flex flex-col items-center whitespace-nowrap text-[16.5px] leading-[25px] tracking-[-0.5px] font-['Open_Sans',sans-serif] [font-stretch:normal]">
          <span>06:49</span><span>26-09-2022</span>
        </div>
        <svg width="24" height="24" viewBox="0 0 24 24" fill="none" stroke="#fff" strokeWidth="1.700" className="ml-[25px] mr-[28px]"><path d="M1.500 2h21v15.500h-8L12 21.500 9.500 17.500h-8z" /></svg>
        <div className="w-px h-[58px] bg-[#55575e]" />
      </div>
    </div>
  );
}

export default function App() {
  return (
    <div className={clsx('relative w-[1920px] h-[1080px] overflow-hidden flex flex-col text-[18px] leading-none text-[#23283a] whitespace-nowrap', SANS)}>
      <div className="h-[1021px] flex flex-col border-l-2 border-r-4 border-[#bcc8de] bg-white">
        <div className="h-[2px] shrink-0 bg-[#b4c2d8]" />
        <div className="h-[5px] shrink-0 bg-[#fafbfe]" />
        <MenuBar />
        <SystemBar />
        <div className="h-[865px] pt-[12px] pl-[19px] pr-[15px] flex flex-col bg-linear-to-b from-[#f2f2fc] to-white to-5% shrink-0">
          <TitleBar />
          <AppBar />
          <div className="flex-1 flex border-l border-b border-[#d0d4e6] bg-linear-to-b from-[#eff2fb] to-[#edf0f9]">
            <div className="flex-1 flex flex-col pl-[3px]">
              <DocumentRow />
              <div className="mt-[2px] flex items-center h-[31px]">
                <YellowButton className="w-[32px]"><ExpandGlyph /></YellowButton>
                <span className="ml-[6px] -mt-[2px] tracking-[-0.2px]">Header</span>
              </div>
              <YellowButton className="w-[32px]"><CollapseGlyph /></YellowButton>
              <ItemTable />
              <ItemActions />
              <ItemSelector />
              <TabStrip />
              <ConfirmationsPanel />
            </div>
            <PageScrollbar />
          </div>
        </div>
        <StatusBar />
      </div>
      <Taskbar />

      {/* remote session bar */}
      <svg width="170" height="46" viewBox="0 0 170 46" className="absolute left-[1728px] top-0">
        <defs><linearGradient id="rdp" x2="0" y2="1"><stop stopColor="#3f6cc8" /><stop offset="1" stopColor="#1d3f94" /></linearGradient></defs>
        <path d="M6 0h158c-12 4-20 17-32 31-7 8-11 9-16 9H14q-6 0-6-6z" fill="url(#rdp)" stroke="#0d1c48" strokeWidth="2" />
        <path d="M37 4h23v25H37zM67 4h23v25H67zM97 4h23v25H97z" fill="#2d57b4" stroke="#1b3988" strokeWidth="1.500" />
        <path d="M41 23h18" stroke="#a9c4f8" strokeWidth="4" />
        <path d="M72 15h9v8h-9zM77 14v-4h10v9h-5" fill="none" stroke="#a9c4f8" strokeWidth="2.500" />
        <path d="M104 12l9 10M113 12l-9 10" stroke="#a9c4f8" strokeWidth="3" />
      </svg>

      {/* mouse cursor */}
      <svg width="19" height="28" viewBox="0 0 19 28" className="absolute left-[1009px] top-[662px]">
        <path d="M1.500 1.500v21l5-4.500 3.500 8 4-1.800-3.500-7.700h6.500z" fill="#fff" stroke="#2b3140" strokeWidth="1.400" />
      </svg>

      <div className="absolute left-[824px] top-[511px] w-[280px] flex flex-col items-center -rotate-45 pointer-events-none text-[#6d6f75]/60 text-[23.5px] leading-[32px] font-light font-['Noto_Sans','Noto_Sans_CJK_SC',sans-serif] [font-stretch:normal]">
        <span>YESdotnet开发框架</span>
        <span>www.yesdotnet.com</span>
      </div>
    </div>
  );
}
